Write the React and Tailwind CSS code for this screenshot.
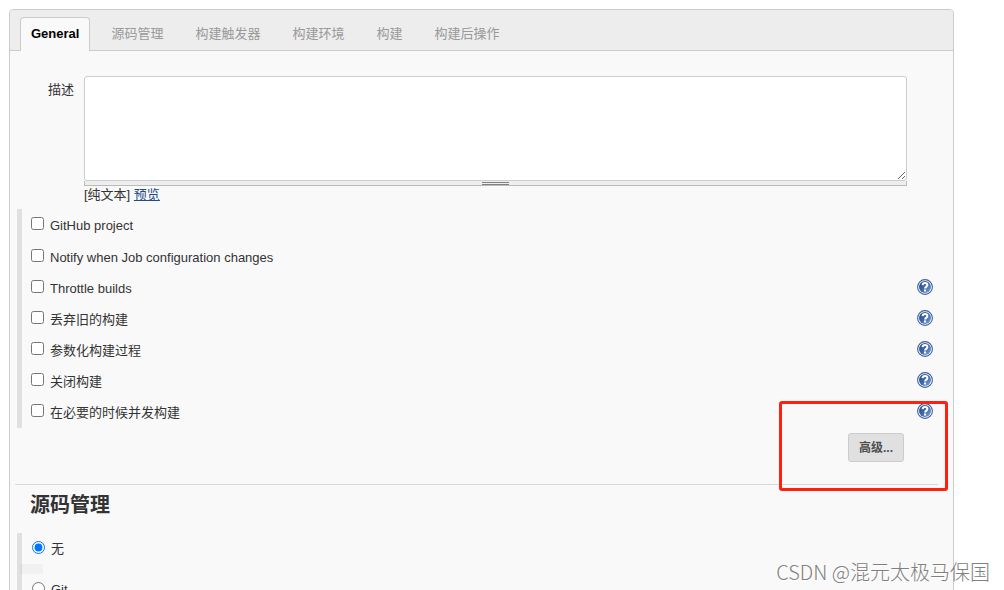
import { useState } from "react";

const tabs = ["General", "源码管理", "构建触发器", "构建环境", "构建", "构建后操作"];

const options = [
  { id: "github", label: "GitHub project", help: false },
  { id: "notify", label: "Notify when Job configuration changes", help: false },
  { id: "throttle", label: "Throttle builds", help: true },
  { id: "discard", label: "丢弃旧的构建", help: true },
  { id: "params", label: "参数化构建过程", help: true },
  { id: "disable", label: "关闭构建", help: true },
  { id: "concurrent", label: "在必要的时候并发构建", help: true },
];

const scmList = [
  { id: "none", label: "无" },
  { id: "git", label: "Git" },
];

function HelpIcon() {
  return (
    <svg className="block w-4 h-4" viewBox="0 0 16 16" aria-hidden="true">
      <defs>
        <linearGradient id="helpFill" x1="0" y1="0" x2="1" y2="1">
          <stop offset="0" stopColor="#23498a" />
          <stop offset="0.5" stopColor="#3f67a8" />
          <stop offset="1" stopColor="#86a6d2" />
        </linearGradient>
      </defs>
      <circle cx="8" cy="8" r="7.4" fill="#fff" stroke="#3b5f9c" strokeWidth="1.1" />
      <circle cx="8" cy="8" r="6" fill="url(#helpFill)" />
      <path
        d="M5.6 6.1C5.7 4.7 6.6 4 8 4S10.4 4.8 10.4 6.1C10.4 7.6 8.1 7.7 8.1 9.6"
        fill="none"
        stroke="#fff"
        strokeWidth="2"
      />
      <rect x="7" y="10.5" width="2.1" height="2" fill="#fff" />
    </svg>
  );
}

function TabBar({ active, onChange }) {
  return (
    <div className="flex gap-2.5 pl-2.5 pt-[7px] bg-[#ededed] border-b border-[#ccc] rounded-t-[3px]">
      {tabs.map((tab) => (
        <button
          key={tab}
          type="button"
          onClick={() => onChange(tab)}
          className={
            tab === active
              ? "-mb-px h-[34px] px-2.5 pb-0.5 rounded-t border border-b-0 border-[#ccc] bg-[#f9f9f9] font-bold text-black"
              : "-mb-px h-[34px] px-2.5 border border-transparent text-[#999]"
          }
        >
          {tab}
        </button>
      ))}
    </div>
  );
}

function Description() {
  return (
    <div className="flex gap-2.5 pt-[25px] pr-[46px]">
      <label htmlFor="description" className="w-16 shrink-0 pt-1 text-right leading-5">
        描述
      </label>
      <div className="grow">
        <textarea
          id="description"
          className="block w-full h-[105px] resize-y rounded-[3px] border border-[#ccc] bg-white p-1 outline-none"
        />
        {/* drag handle */}
        <div className="flex h-[5px] flex-col items-center border border-t-0 border-[#bbb] bg-[#eee]">
          <div className="h-[3px] w-[27px] mt-px border-y border-[#808080]" />
        </div>
        <div className="leading-[17px]">
          [纯文本]{" "}
          <a href="#preview" className="text-[#204a87] underline">
            预览
          </a>
        </div>
      </div>
    </div>
  );
}

function App() {
  const [activeTab, setActiveTab] = useState("General");
  const [checked, setChecked] = useState({});
  const [scm, setScm] = useState("none");

  const toggle = (id) => {
    setChecked((prev) => ({ ...prev, [id]: !prev[id] }));
  };

  return (
    <div className="relative h-screen overflow-hidden bg-white pt-[9px] pl-[9px] pr-[50px] font-['Liberation_Sans','Noto_Sans_CJK_SC',sans-serif] text-[13px] text-[#333]">
      <div className="min-h-full rounded-t border border-[#ccc] bg-[#f9f9f9]">
        <TabBar active={activeTab} onChange={setActiveTab} />
        <Description />

        {/* Job options */}
        <div className="ml-[7px] mt-1.5 border-l-[5px] border-[#e0e0e0] pt-px pl-[9px] pr-5">
          {options.map((opt) => (
            <div key={opt.id} className="flex h-[31px] first:h-8 items-start">
              <input
                id={opt.id}
                type="checkbox"
                checked={!!checked[opt.id]}
                onChange={() => toggle(opt.id)}
                className="mt-[7px] mr-1.5 h-[13px] w-[13px]"
              />
              <label htmlFor={opt.id} className="leading-8">
                {opt.label}
              </label>
              {opt.help && (
                <button type="button" aria-label="Help" className="ml-auto mt-1.5">
                  <HelpIcon />
                </button>
              )}
            </div>
          ))}
        </div>

        <div className="relative flex justify-end pt-[5px] pr-[49px] pb-[22px]">
          <button
            type="button"
            className="h-[29px] w-14 rounded-[3px] border border-[#ccc] bg-[#e0e0e0] text-xs font-bold text-[#4d4d4d]"
          >
            高级...
          </button>
          <div className="pointer-events-none absolute right-[5px] -top-[27px] h-[90px] w-[169px] rounded-[3px] border-3 border-[#ff2010]" />
        </div>

        <hr className="ml-[5px] mr-[15px] border-[#d9d9d9]" />

        {/* SCM */}
        <h2 className="pl-5 pt-1 text-xl leading-8 font-bold">源码管理</h2>
        <div className="relative ml-[7px] mt-3 border-l-[5px] border-[#e0e0e0] pl-2.5">
          {scmList.map((item) => (
            <div key={item.id} className="flex h-[41px] items-start">
              <input
                id={item.id}
                type="radio"
                name="scm"
                checked={scm === item.id}
                onChange={() => setScm(item.id)}
                className="mt-2 mr-1.5 h-[13px] w-[13px]"
              />
              <label htmlFor={item.id} className="leading-8">
                {item.label}
              </label>
            </div>
          ))}
          <div className="absolute -left-0.5 top-[31px] h-2.5 w-[23px] bg-black/3" />
        </div>
      </div>

      <div className="pointer-events-none absolute right-3.5 bottom-1 font-['Noto_Sans_CJK_SC',sans-serif] text-xl leading-7 font-light text-[#808080] [text-shadow:1px_1px_0_#fff]">
        CSDN @混元太极马保国
      </div>
    </div>
  );
}

export default App;
